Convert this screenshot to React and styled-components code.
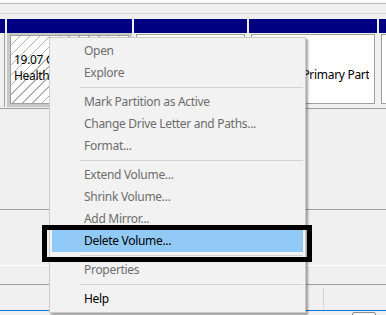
import React from 'react';
import styled, { createGlobalStyle } from 'styled-components';

const GlobalStyle = createGlobalStyle`
  html, body {
    margin: 0;
    padding: 0;
    background: #f0f0f0;
    overflow: hidden;
  }
  body {
    font-family: "Noto Sans", "Open Sans", sans-serif;
  }
`;

const Screen = styled.div`
  position: relative;
  width: 386px;
  height: 315px;
  overflow: hidden;
  background: #f0f0f0;
  display: flex;
  flex-direction: column;
`;

const TopEdge = styled.div`
  flex: none;
  height: 3px;
  background: #fafafa;
  border-bottom: 1px solid #b9b9b9;
`;

const ToolStrip = styled.div`
  flex: none;
  height: 9px;
  border-bottom: 1px solid #dadada;
  margin-bottom: 5px;
`;

const DiskRow = styled.div`
  display: flex;
  gap: 2px;
  height: 88px;
  flex: none;
`;

const Column = styled.div`
  display: flex;
  flex-direction: column;
  width: ${p => (p.$w ? `${p.$w}px` : 'auto')};
  flex: ${p => (p.$w ? 'none' : '1')};
`;

const ColumnHead = styled.div`
  height: 14px;
  background: #000080;
  flex: none;
`;

const ColumnBody = styled.div`
  flex: 1;
  display: flex;
  min-height: 0;
  background: ${p => (p.$selected ? '#c8c8c8' : '#f0f0f0')};
  padding: ${p => (p.$selected ? '2px 3px 3px 3px' : '1px 2px 3px 2px')};
  border-right: ${p => (p.$edge ? '1px solid #a0a0a0' : 'none')};
`;

const PartitionBox = styled.div`
  flex: 1;
  min-width: 0;
  border: 1px solid #a0a0a0;
  background-color: #ffffff;
  background-image: ${p =>
    p.$hatched
      ? 'repeating-linear-gradient(135deg, #ffffff 0px, #ffffff 6px, #b4b4b4 6px, #b4b4b4 7px)'
      : 'none'};
  padding: 16px 5px 0 3px;
  overflow: hidden;
  font-size: 12px;
  letter-spacing: -0.3px;
  line-height: 16px;
  color: #000;
  white-space: nowrap;
`;

const PartLine = styled.div`
  overflow: hidden;
`;

const Pane = styled.div`
  flex: none;
  height: ${p => p.$h}px;
  margin-top: ${p => p.$gap || 0}px;
  border-top: ${p => (p.$top ? `1px solid ${p.$top}` : 'none')};
  border-bottom: 1px solid ${p => p.$line};
`;

const StatusBar = styled.div`
  flex: none;
  height: 21px;
  padding: 3px 0 1px;
  display: flex;
  border-bottom: 1px solid #0078d7;
`;

const StatusCell = styled.div`
  width: 323px;
  border-right: 1px solid #d5d5d5;
`;

const Taskbar = styled.div`
  flex: 1;
  display: flex;
  align-items: flex-start;
  padding-left: 352px;
  padding-top: 1px;
`;

const ScrollGrip = styled.div`
  width: 22px;
  height: 8px;
  border: 1px solid #8c8c8c;
  border-radius: 2px;
  background: #f8f8f8;
`;

const Menu = styled.div`
  position: absolute;
  left: 49px;
  top: 37px;
  width: 257px;
  box-sizing: border-box;
  background: #f2f2f2;
  border: 1px solid #cccccc;
  padding: 2px;
  box-shadow: 2px 2px 2px rgba(0, 0, 0, 0.35);
  font-size: 12px;
  letter-spacing: -0.3px;
`;

const MenuItem = styled.div`
  height: 22px;
  line-height: 22px;
  padding-left: 32px;
  color: ${p => (p.$enabled ? '#000000' : '#6d6d6d')};
  background: ${p => (p.$active ? '#91c9f7' : 'transparent')};
  white-space: nowrap;
`;

const MenuSeparator = styled.div`
  height: 7px;
  display: flex;
  align-items: center;
  padding-left: 28px;

  &::after {
    content: '';
    flex: 1;
    height: 1px;
    background: #d2d2d2;
  }
`;

const Callout = styled.div`
  position: absolute;
  left: 42px;
  top: 225px;
  width: 270px;
  height: 37px;
  box-sizing: border-box;
  border: 5px solid #000;
  pointer-events: none;
`;

const menu = [
  { label: 'Open' },
  { label: 'Explore' },
  { sep: true },
  { label: 'Mark Partition as Active' },
  { label: 'Change Drive Letter and Paths...' },
  { label: 'Format...' },
  { sep: true },
  { label: 'Extend Volume...' },
  { label: 'Shrink Volume...' },
  { label: 'Add Mirror...' },
  { label: 'Delete Volume...', enabled: true, active: true },
  { sep: true },
  { label: 'Properties' },
  { sep: true },
  { label: 'Help', enabled: true },
];

export default function App() {
  return (
    <>
      <GlobalStyle />
      <Screen>
        <TopEdge />
        <ToolStrip />
        <DiskRow>
          <Column $w={5}>
            <ColumnHead />
            <ColumnBody $edge />
          </Column>
          <Column $w={125}>
            <ColumnHead />
            <ColumnBody $selected>
              <PartitionBox $hatched>
                <PartLine>19.07 GB NTFS</PartLine>
                <PartLine>Healthy (Boot, Page File, Crash Dump, Primary Partition)</PartLine>
              </PartitionBox>
            </ColumnBody>
          </Column>
          <Column $w={113}>
            <ColumnHead />
            <ColumnBody>
              <PartitionBox>
                <PartLine>29.30 GB</PartLine>
                <PartLine>Healthy (Primary Partition)</PartLine>
              </PartitionBox>
            </ColumnBody>
          </Column>
          <Column $w={128}>
            <ColumnHead />
            <ColumnBody>
              <PartitionBox>
                <PartLine>30.00 GB</PartLine>
                <PartLine>Healthy (Primary Partition)</PartLine>
              </PartitionBox>
            </ColumnBody>
          </Column>
          <Column>
            <ColumnHead />
            <ColumnBody>
              <PartitionBox />
            </ColumnBody>
          </Column>
        </DiskRow>
        <Pane $gap={1} $top="#a0a0a0" $h={100} $line="#a0a0a0" />
        <Pane $h={55} $line="#ffffff" />
        <Pane $h={18} $line="#a0a0a0" />
        <StatusBar>
          <StatusCell />
        </StatusBar>
        <Taskbar>
          <ScrollGrip />
        </Taskbar>

        <Menu>
          {menu.map((item, i) =>
            item.sep ? (
              <MenuSeparator key={i} />
            ) : (
              <MenuItem key={i} $enabled={item.enabled} $active={item.active}>
                {item.label}
              </MenuItem>
            )
          )}
        </Menu>
        <Callout />
      </Screen>
    </>
  );
}
